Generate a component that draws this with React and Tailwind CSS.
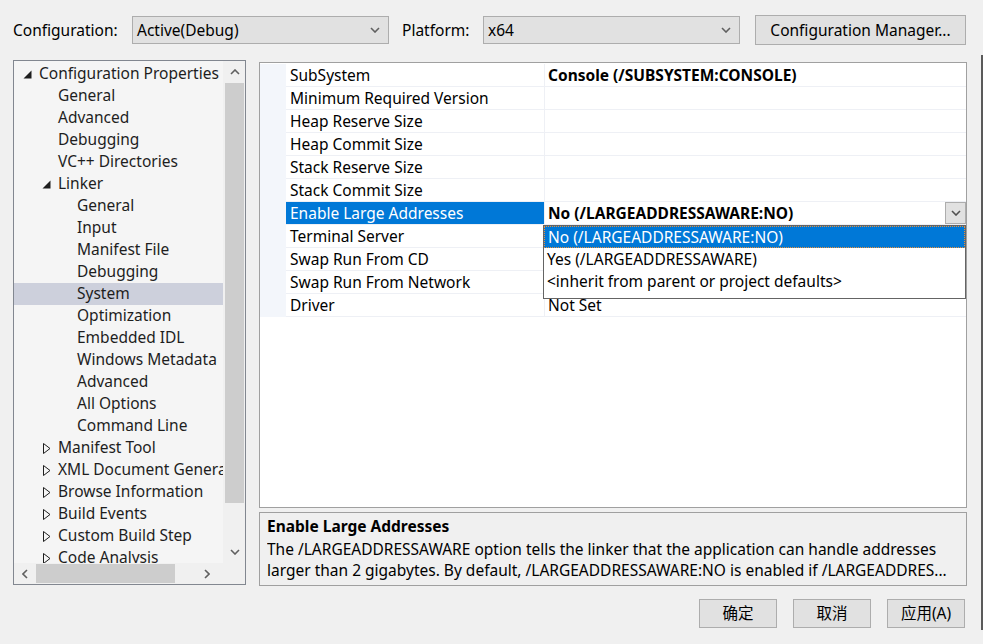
import React from 'react'

const TREE = [
  { t: 'Configuration Properties', lvl: 0, icon: 'open' },
  { t: 'General', lvl: 1 },
  { t: 'Advanced', lvl: 1 },
  { t: 'Debugging', lvl: 1 },
  { t: 'VC++ Directories', lvl: 1 },
  { t: 'Linker', lvl: 1, icon: 'open' },
  { t: 'General', lvl: 2 },
  { t: 'Input', lvl: 2 },
  { t: 'Manifest File', lvl: 2 },
  { t: 'Debugging', lvl: 2 },
  { t: 'System', lvl: 2, sel: true },
  { t: 'Optimization', lvl: 2 },
  { t: 'Embedded IDL', lvl: 2 },
  { t: 'Windows Metadata', lvl: 2 },
  { t: 'Advanced', lvl: 2 },
  { t: 'All Options', lvl: 2 },
  { t: 'Command Line', lvl: 2 },
  { t: 'Manifest Tool', lvl: 1, icon: 'closed' },
  { t: 'XML Document Generator', lvl: 1, icon: 'closed' },
  { t: 'Browse Information', lvl: 1, icon: 'closed' },
  { t: 'Build Events', lvl: 1, icon: 'closed' },
  { t: 'Custom Build Step', lvl: 1, icon: 'closed' },
  { t: 'Code Analysis', lvl: 1, icon: 'closed' },
]

const INDENT = ['pl-[6px]', 'pl-[25px]', 'pl-[44px]']

const PROPS = [
  { name: 'SubSystem', value: 'Console (/SUBSYSTEM:CONSOLE)', bold: true },
  { name: 'Minimum Required Version' },
  { name: 'Heap Reserve Size' },
  { name: 'Heap Commit Size' },
  { name: 'Stack Reserve Size' },
  { name: 'Stack Commit Size' },
  { name: 'Enable Large Addresses', value: 'No (/LARGEADDRESSAWARE:NO)', bold: true, sel: true },
  { name: 'Terminal Server' },
  { name: 'Swap Run From CD' },
  { name: 'Swap Run From Network' },
  { name: 'Driver', value: 'Not Set' },
]

function Chevron({ dir = 'down', className = '' }) {
  const pts = {
    down: '1,1 5,5 9,1',
    up: '1,5 5,1 9,5',
    left: '5,1 1,5 5,9',
    right: '1,1 5,5 1,9',
  }[dir]
  const w = dir === 'left' || dir === 'right' ? 6 : 10
  const h = dir === 'left' || dir === 'right' ? 10 : 6
  return (
    <svg width={w} height={h} viewBox={`0 0 ${w} ${h}`} className={className}>
      <polyline points={pts} fill="none" stroke="currentColor" strokeWidth="1.6" />
    </svg>
  )
}

function Combo({ text }) {
  return (
    <div className="w-[257px] h-[28px] bg-[#e1e1e1] border border-[#adadad] flex items-center pl-[4px] pr-[8px]">
      <span className="flex-1 pt-[2px]">{text}</span>
      <Chevron dir="down" className="text-[#606060]" />
    </div>
  )
}

function TreeIcon({ kind }) {
  if (kind === 'open')
    return (
      <svg width="9" height="9" viewBox="0 0 9 9" className="ml-[3px]">
        <polygon points="8.5,0.5 8.5,8.5 0.5,8.5" fill="#1e1e1e" />
      </svg>
    )
  if (kind === 'closed')
    return (
      <svg width="8" height="11" viewBox="0 0 8 11" className="ml-[4px]">
        <polygon points="0.5,0.5 7,5.5 0.5,10.5" fill="none" stroke="#1e1e1e" strokeWidth="1" />
      </svg>
    )
  return null
}

function Tree() {
  return (
    <div className="w-[233px] h-[525px] border border-[#828790] bg-[#f0f0f0] flex flex-col shrink-0">
      <div className="flex flex-1 min-h-0">
        <div className="w-[209px] bg-[#f5f5f5] overflow-hidden pt-[2px]">
          {TREE.map((r, i) => (
            <div key={i}
              className={`h-[22px] flex items-center whitespace-nowrap text-[#1e1e1e] ${INDENT[r.lvl]} ${r.sel ? 'bg-[#cdd0dc]' : ''}`}>
              <div className="w-[19px] shrink-0 flex items-center">
                <TreeIcon kind={r.icon} />
              </div>
              <span>{r.t}</span>
            </div>
          ))}
        </div>
        {/* vertical scrollbar */}
        <div className="flex-1 flex flex-col pl-[1px]">
          <div className="h-[22px] flex items-center justify-center text-[#606060]">
            <Chevron dir="up" />
          </div>
          <div className="h-[420px] bg-[#cdcdcd] mx-[1px]" />
          <div className="flex-1" />
          <div className="h-[22px] flex items-center justify-center text-[#606060]">
            <Chevron dir="down" />
          </div>
        </div>
      </div>
      {/* horizontal scrollbar */}
      <div className="h-[21px] flex items-center">
        <div className="w-[22px] flex justify-center text-[#606060]"><Chevron dir="left" /></div>
        <div className="w-[139px] h-[19px] bg-[#cdcdcd]" />
        <div className="flex-1" />
        <div className="w-[22px] flex justify-center text-[#606060] mr-[27px]"><Chevron dir="right" /></div>
      </div>
    </div>
  )
}

function Grid() {
  return (
    <div className="relative w-[708px] h-[446px] mt-[2px] border border-[#a0a0a0] bg-white pt-[1px]">
      {PROPS.map((p, i) => (
        <div key={i} className="flex h-[23px]">
          <div className="w-[26px] bg-[#f3f6fb]" />
          <div className={`w-[259px] border-b border-r border-[#eef0f5] flex items-center pl-[4px] pt-[1px] whitespace-nowrap ${p.sel ? 'bg-[#0078d7] text-white' : 'text-black'}`}>
            {p.name}
          </div>
          <div className="flex-1 border-b border-[#eef0f5] flex items-center pl-[3px] whitespace-nowrap">
            <span className={`flex-1 pt-[1px] ${p.bold ? 'font-bold' : ''}`}>{p.value}</span>
            {p.sel && (
              <div className="w-[21px] h-[22px] bg-[#e1e1e1] border border-[#adadad] flex items-center justify-center text-[#505050]">
                <Chevron dir="down" />
              </div>
            )}
          </div>
        </div>
      ))}

      {/* open dropdown list */}
      <div className="absolute left-[283px] top-[162px] w-[423px] h-[74px] bg-white border border-[#646464]">
        <div className="h-[22px] bg-[#0078d7] text-white flex items-center pl-[3px] pt-[1px] border border-dotted border-[#e8903a]">
          No (/LARGEADDRESSAWARE:NO)
        </div>
        <div className="h-[22px] flex items-center pl-[3px] pt-[1px]">Yes (/LARGEADDRESSAWARE)</div>
        <div className="h-[22px] flex items-center pl-[3px] pt-[1px]">&lt;inherit from parent or project defaults&gt;</div>
      </div>
    </div>
  )
}

function Description() {
  return (
    <div className="w-[708px] h-[74px] border border-[#a0a0a0] bg-[#f0f0f0] px-[7px] pt-[3px] leading-[21px] text-black">
      <div className="font-bold">Enable Large Addresses</div>
      <div className="whitespace-nowrap overflow-hidden mt-[2px]">The /LARGEADDRESSAWARE option tells the linker that the application can handle addresses</div>
      <div className="whitespace-nowrap overflow-hidden">larger than 2 gigabytes. By default, /LARGEADDRESSAWARE:NO is enabled if /LARGEADDRES...</div>
    </div>
  )
}

function Button({ children }) {
  return (
    <button className="w-[78px] h-[29px] bg-[#e1e1e1] border border-[#adadad] text-black flex items-center justify-center">
      {children}
    </button>
  )
}

export default function App() {
  return (
    <div className="relative w-[983px] h-[644px] bg-[#f0f0f0] overflow-hidden text-black text-[15.5px] font-['Noto_Sans','Noto_Sans_CJK_SC',sans-serif]">
      {/* top bar */}
      <div className="flex items-center h-[60px] pl-[13px]">
        <span className="w-[119px] pt-[2px]">Configuration:</span>
        <Combo text="Active(Debug)" />
        <span className="ml-[13px] w-[81px] pt-[2px]">Platform:</span>
        <Combo text="x64" />
        <button className="ml-[15px] w-[211px] h-[30px] bg-[#e1e1e1] border border-[#adadad] pt-[1px]">
          Configuration Manager...
        </button>
      </div>

      {/* main */}
      <div className="flex pl-[13px] gap-[13px]">
        <Tree />
        <div className="flex flex-col gap-[4px]">
          <Grid />
          <Description />
        </div>
      </div>

      {/* buttons */}
      <div className="flex justify-end gap-[16px] pr-[18px] mt-[13px]">
        <Button>确定</Button>
        <Button>取消</Button>
        <Button>应用(A)</Button>
      </div>

      {/* edge of the window behind */}
      <div className="absolute right-0 top-[55px] w-[2px] h-[575px] bg-[#5a5a5a]" />
    </div>
  )
}
